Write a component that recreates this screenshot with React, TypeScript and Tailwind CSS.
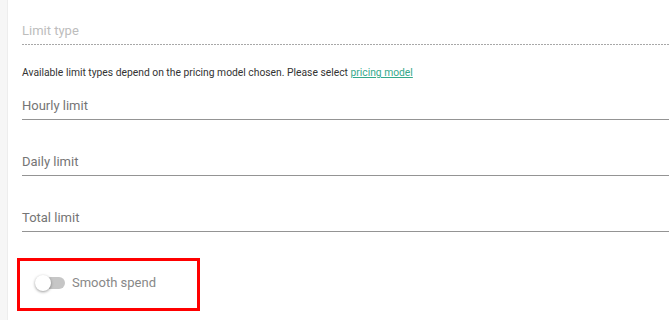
import React from "react";

function Field({ label, mt }: { label: string; mt: string }) {
  return (
    <div className={`${mt} border-b border-[#949494] pb-[5px]`}>
      <div className="text-[13px] leading-[16px] text-[#757575]">{label}</div>
    </div>
  );
}

export default function App() {
  return (
    <div
      className="flex w-[669px] h-[320px] overflow-hidden bg-white"
      style={{ fontFamily: "Roboto, 'Liberation Sans', sans-serif" }}
    >
      <div className="w-[8px] shrink-0 bg-[#f6f6f6] border-r border-[#ededed]" />
      <div className="flex-1 pl-[14px] flex flex-col">
        <div className="pt-[23px]">
          <div className="text-[13px] leading-[16px] text-[#bdbdbd]">Limit type</div>
          <div className="mt-[5px] h-px w-full bg-[linear-gradient(to_right,#a8a8a8_0,#a8a8a8_67%,transparent_0)] bg-[length:3px_1px] bg-repeat-x" />
        </div>
        <div className="mt-[22px] text-[10.3px] leading-[12px] text-[#333333]">
          Available limit types depend on the pricing model chosen. Please select{" "}
          <a className="text-[#34a98b] underline" href="#">
            pricing model
          </a>
        </div>
        <Field label="Hourly limit" mt="mt-[19px]" />
        <Field label="Daily limit" mt="mt-[34px]" />
        <Field label="Total limit" mt="mt-[34px]" />
        <div className="mt-[26px] ml-[-5px] w-[183px] h-[53px] border-[3px] border-[#ff0000] flex items-center pb-[3px] pl-[15px]">
          <div className="relative w-[30px] h-[16px] shrink-0">
            <div className="absolute left-[3px] top-[2px] w-[27px] h-[12px] rounded-full bg-[#c6c6c6]" />
            <div className="absolute left-0 top-0 w-[16px] h-[16px] rounded-full bg-white shadow-[0_1px_3px_rgba(0,0,0,0.4)]" />
          </div>
          <span className="ml-[7px] text-[13px] leading-[16px] text-[#888888]">Smooth spend</span>
        </div>
      </div>
    </div>
  );
}
